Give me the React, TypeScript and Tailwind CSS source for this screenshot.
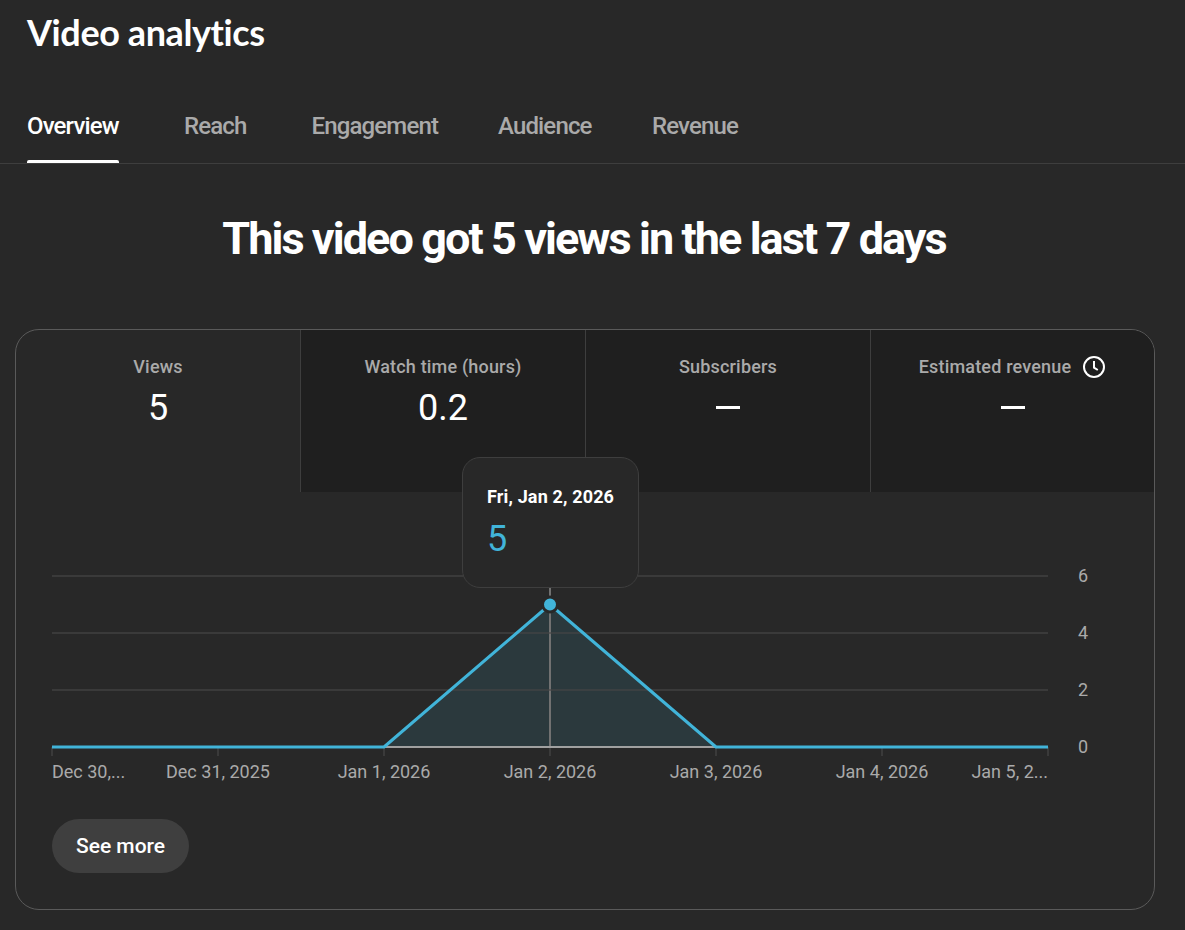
import React from "react";

const tabs = [
  { label: "Overview", width: "w-[157px]", active: true },
  { label: "Reach", width: "w-[127.5px]", active: false },
  { label: "Engagement", width: "w-[186.5px]", active: false },
  { label: "Audience", width: "w-[154px]", active: false },
  { label: "Revenue", width: "w-[100px]", active: false },
];

const gridLines = [
  { y: 84, label: "6" },
  { y: 141, label: "4" },
  { y: 198, label: "2" },
];

const days = [
  { x: 36, label: "Dec 30,...", anchor: "start" as const },
  { x: 202, label: "Dec 31, 2025", anchor: "middle" as const },
  { x: 368, label: "Jan 1, 2026", anchor: "middle" as const },
  { x: 534, label: "Jan 2, 2026", anchor: "middle" as const },
  { x: 700, label: "Jan 3, 2026", anchor: "middle" as const },
  { x: 866, label: "Jan 4, 2026", anchor: "middle" as const },
  { x: 1032, label: "Jan 5, 2...", anchor: "end" as const },
];

function ClockIcon() {
  return (
    <svg width="24" height="24" viewBox="0 0 24 24" fill="none" stroke="#fff" strokeWidth="2">
      <circle cx="12" cy="12" r="10" />
      <path d="M12 6V12.7L15.8 15" />
    </svg>
  );
}

function Metric({
  label,
  value,
  active = false,
  clock = false,
}: {
  label: string;
  value: string;
  active?: boolean;
  clock?: boolean;
}) {
  return (
    <div
      className={
        active
          ? "flex flex-col items-center"
          : "flex flex-col items-center border-l border-[#3e3e3e] bg-[#1f1f1f]"
      }
    >
      <div className="mt-[24px] flex h-[26px] items-center gap-[11px] text-[18px] font-medium leading-[26px] tracking-[0.18px] text-[#aaa]">
        <span>{label}</span>
        {clock && <ClockIcon />}
      </div>
      {value === "—" ? (
        <div className="mt-[26px] h-[3px] w-[24px] overflow-hidden bg-white text-[3px] leading-[3px] text-white">—</div>
      ) : (
        <div className="mt-[4px] text-[36px] leading-[48px] text-white">{value}</div>
      )}
    </div>
  );
}

function Chart() {
  return (
    <svg className="block" width="1138" height="308" viewBox="0 0 1138 308">
      <path d="M534 112.5L368 255H700Z" fill="#41b4d9" fillOpacity="0.12" />
      <path d="M534 96V255" stroke="#717171" strokeWidth="2" />
      {gridLines.map((g) => (
        <path key={g.y} d={`M36 ${g.y}H1032`} stroke="#464646" strokeOpacity="0.6" strokeWidth="2" />
      ))}
      {days.map((d) => (
        <path key={d.x} d={`M${d.x} 255V264`} stroke="#3a3a3a" strokeWidth="2" />
      ))}
      <path d="M36 255H1032" stroke="#a0a0a0" strokeWidth="2" />
      <path
        d="M36 255H368L534 112.5L700 255H1032"
        fill="none"
        stroke="#41b4d9"
        strokeWidth="3"
        strokeLinejoin="round"
      />
      <circle cx="534" cy="112.5" r="7.5" fill="#41b4d9" stroke="#282828" strokeWidth="3" />
      <g fill="#aaa" fontSize="18">
        {gridLines.map((g) => (
          <text key={g.y} x="1062" y={g.y + 6}>
            {g.label}
          </text>
        ))}
        <text x="1062" y="261">
          0
        </text>
        {days.map((d) => (
          <text key={d.x} x={d.x} y="286" textAnchor={d.anchor}>
            {d.label}
          </text>
        ))}
      </g>
    </svg>
  );
}

export default function App() {
  return (
    <div className="h-[930px] w-[1185px] overflow-hidden bg-[#282828] font-['Roboto',sans-serif] text-white">
      <h1 className="h-[96px] pl-[27px] pt-[8px] font-['Lato',sans-serif] text-[36px] font-bold leading-[48px] tracking-[-0.4px]">
        Video analytics
      </h1>
      <nav className="flex h-[68px] border-b border-[#3e3e3e] pl-[27px]">
        {tabs.map((t) => (
          <div key={t.label} className={t.width}>
            <div
              className={
                t.active
                  ? "flex h-[67px] w-[92px] flex-col justify-between pt-[15px] text-[24px] font-medium leading-[30px] tracking-[-0.85px] text-white"
                  : "pt-[15px] text-[24px] font-medium leading-[30px] tracking-[-0.85px] text-[#aaa]"
              }
            >
              <span>{t.label}</span>
              {t.active && <span className="h-[3px] rounded-t-[2px] bg-white" />}
            </div>
          </div>
        ))}
      </nav>
      <h2 className="h-[165px] pr-[17px] pt-[51px] text-center text-[45px] font-bold leading-[48px] tracking-[-1.93px]">
        This video got 5 views in the last 7 days
      </h2>
      <section className="relative ml-[15px] h-[581px] w-[1140px] rounded-[24px] border border-[#5a5a5a]">
        <div className="grid h-[162px] grid-cols-[284px_285px_285px_284px] overflow-hidden rounded-t-[23px]">
          <Metric label="Views" value="5" active />
          <Metric label="Watch time (hours)" value="0.2" />
          <Metric label="Subscribers" value="—" />
          <Metric label="Estimated revenue" value="—" clock />
        </div>
        <Chart />
        <button className="ml-[36px] mt-[19px] block h-[54px] w-[137px] rounded-full bg-[#3f3f3f] text-[21px] font-medium leading-[54px]">
          See more
        </button>
        <div className="absolute left-[446px] top-[127px] h-[131px] w-[177px] rounded-[18px] border border-[#3e3e3e] bg-[#282828] pl-[24px] pt-[26px]">
          <div className="whitespace-nowrap text-[18px] font-bold leading-[26px] tracking-[0.15px]">Fri, Jan 2, 2026</div>
          <div className="mt-[5px] text-[36px] leading-[48px] text-[#41b4d9]">5</div>
        </div>
      </section>
    </div>
  );
}
